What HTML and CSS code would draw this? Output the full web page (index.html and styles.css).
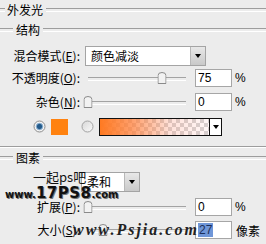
FILE: index.html
```html
<!DOCTYPE html>
<html>
<head>
<meta charset="utf-8">
<link rel="stylesheet" href="styles.css">
</head>
<body>
<div class="dialog">
  <div class="legend legend-outer"><span>外发光</span></div>
  <div class="group">
    <div class="legend legend-inner"><span>结构</span></div>
    <div class="row row-blend">
      <label class="lbl">混合模式(<u>E</u>):</label>
      <div class="select select-wide"><span class="select-value">颜色减淡</span><span class="select-btn"><i class="tri"></i></span></div>
    </div>
    <div class="row row-opacity">
      <label class="lbl">不透明度(<u>O</u>):</label>
      <div class="slider"><span class="thumb" style="left:75%"><svg width="9" height="12" viewBox="0 0 9 12"><path d="M0.5 11.5V3.5Q0.5 0.5 4.5 0.5Q8.5 0.5 8.5 3.5V11.5Z" fill="#f2f2f2" stroke="#8a8a8a"/></svg></span></div>
      <div class="num">75</div><span class="unit">%</span>
    </div>
    <div class="row row-noise">
      <label class="lbl">杂色(<u>N</u>):</label>
      <div class="slider"><span class="thumb" style="left:0%"><svg width="9" height="12" viewBox="0 0 9 12"><path d="M0.5 11.5V3.5Q0.5 0.5 4.5 0.5Q8.5 0.5 8.5 3.5V11.5Z" fill="#f2f2f2" stroke="#8a8a8a"/></svg></span></div>
      <div class="num">0</div><span class="unit">%</span>
    </div>
    <div class="row row-color">
      <svg class="radio" width="13" height="13" viewBox="0 0 13 13"><circle cx="6.5" cy="6.5" r="5.5" fill="#f3f3f3" stroke="#8c8c8c"/><circle cx="6.5" cy="6.5" r="3.2" fill="#235a8a" stroke="#8fb4d6" stroke-width="1"/></svg>
      <span class="swatch"></span>
      <svg class="radio radio-off" width="13" height="13" viewBox="0 0 13 13"><defs><linearGradient id="rg" x1="0" y1="0" x2="1" y2="1"><stop offset="0" stop-color="#d6d6d6"/><stop offset="1" stop-color="#fbfbfb"/></linearGradient></defs><circle cx="6.5" cy="6.5" r="5.5" fill="url(#rg)" stroke="#a3a3a3"/></svg>
      <div class="gradient"><span class="grad-fill"></span><span class="grad-btn"><i class="tri"></i></span></div>
    </div>
  </div>
  <div class="legend legend-elements"><span>图素</span></div>
  <div class="row row-tech">
    <label class="lbl"></label>
    <div class="select select-narrow"><span class="select-value">柔和</span><span class="select-btn"><i class="tri"></i></span></div>
  </div>
  <div class="row row-spread">
    <label class="lbl">扩展(<u>P</u>):</label>
    <div class="slider"><span class="thumb" style="left:0%"><svg width="9" height="12" viewBox="0 0 9 12"><path d="M0.5 11.5V3.5Q0.5 0.5 4.5 0.5Q8.5 0.5 8.5 3.5V11.5Z" fill="#f2f2f2" stroke="#8a8a8a"/></svg></span></div>
    <div class="num">0</div><span class="unit">%</span>
  </div>
  <div class="row row-size">
    <label class="lbl">大小(<u>S</u>):</label>
    <div class="slider"><span class="thumb" style="left:15.5%"><svg width="9" height="12" viewBox="0 0 9 12"><path d="M0.5 11.5V3.5Q0.5 0.5 4.5 0.5Q8.5 0.5 8.5 3.5V11.5Z" fill="#f2f2f2" stroke="#8a8a8a"/></svg></span></div>
    <div class="num"><span class="sel">27</span></div><span class="unit">像素</span>
  </div>

  <div class="wm wm-cn">一起ps吧</div>
  <div class="wm wm-17"><span class="wm-small">www.</span><span class="wm-big">17PS8</span><span class="wm-small">.com</span></div>
  <div class="wm wm-psjia">www.Psjia.com</div>
</div>
</body>
</html>
```

FILE: styles.css
```css
* { box-sizing: border-box; }
html, body { margin: 0; padding: 0; }
body {
  width: 266px;
  height: 244px;
  overflow: hidden;
  background: #ececec;
  font-family: "Noto Sans CJK SC", "Noto Sans", sans-serif;
  font-size: 12px;
  color: #000;
}
.dialog { position: relative; width: 266px; height: 244px; }

.legend { display: flex; align-items: center; height: 14px; line-height: 14px; }
.legend::before, .legend::after {
  content: "";
  height: 2px;
  border-top: 1px solid #9d9d9d;
  border-bottom: 1px solid #fff;
}
.legend::after { flex: 1; margin-left: 3px; }
.legend-outer { margin-top: 3px; }
.legend-outer::before { width: 5px; margin-right: 2px; }
.legend-inner { margin-top: 6px; }
.legend-inner::before { width: 13px; margin-right: 3px; }
.legend-elements { margin-top: 4px; }
.legend-elements::before { width: 13px; margin-right: 3px; }

.group {
  border-bottom: 1px solid #9d9d9d;
  box-shadow: 0 1px 0 #fff;
  padding-bottom: 10px;
}

.row { display: flex; align-items: center; }
.lbl { width: 80px; text-align: right; margin-right: 5px; line-height: 14px; white-space: nowrap; }
.lbl u { text-decoration: underline; text-underline-offset: 1px; }

.row-blend { height: 20px; margin-top: 9px; }
.row-opacity { height: 18px; margin-top: 3px; }
.row-noise { height: 18px; margin-top: 6px; }
.row-color { height: 19px; margin-top: 6px; padding-left: 33px; }
.row-tech { height: 20px; margin-top: 7px; }
.row-spread { height: 18px; margin-top: 6px; }
.row-size { height: 18px; margin-top: 5px; }

.select {
  display: flex;
  height: 20px;
  background: #fff;
  border: 1px solid #a4a4a4;
}
.select-wide { width: 121px; }
.select-narrow { width: 59px; margin-left: -4px; }
.select-value { flex: 1; padding-left: 5px; line-height: 18px; }
.select-btn {
  width: 15px;
  display: flex;
  align-items: center;
  justify-content: center;
  background: linear-gradient(#e8e8e8, #c9c9c9);
  border-left: 1px solid #b8b8b8;
}
.tri {
  display: block;
  width: 0; height: 0;
  border-left: 3.5px solid transparent;
  border-right: 3.5px solid transparent;
  border-top: 4px solid #000;
}

.slider { position: relative; width: 98px; height: 18px; margin-left: 3px; }
.slider::before {
  content: "";
  position: absolute;
  left: 0; right: 0; top: 8px;
  height: 2px;
  border-top: 1px solid #a3a3a3;
  border-bottom: 1px solid #fff;
}
.thumb { position: absolute; top: 3px; width: 9px; height: 12px; transform: translateX(-50%); }
.thumb svg { display: block; }

.num {
  width: 37px;
  height: 18px;
  margin-left: 9px;
  background: #fff;
  border: 1px solid #a6a6a6;
  font-family: "Liberation Sans", Arial, sans-serif;
  font-size: 12px;
  line-height: 16px;
  padding-left: 2px;
}
.sel { background: #6f96d8; color: #1b2f5a; padding: 0 1px; }
.unit { margin-left: 3px; font-family: "Liberation Sans", "Noto Sans CJK SC", sans-serif; font-size: 12px; }
.row-size .unit { font-family: "Noto Sans CJK SC", sans-serif; margin-left: 4px; }

.radio { display: block; }
.swatch { width: 17px; height: 16px; margin-left: 5px; background: #ff8210; }
.radio-off { margin-left: 13px; }
.gradient {
  display: flex;
  width: 123px;
  height: 18px;
  margin-left: 5px;
  border: 1px solid #111;
}
.grad-fill {
  flex: 1;
  background:
    linear-gradient(to right, #ff7a22 0%, rgba(255,128,60,0.75) 30%, rgba(255,140,110,0.25) 65%, rgba(255,160,160,0.08) 100%),
    conic-gradient(#d4d4d4 25%, #fff 0 50%, #d4d4d4 0 75%, #fff 0) 0 0 / 8px 8px;
}
.grad-btn {
  width: 12px;
  display: flex;
  align-items: center;
  justify-content: center;
  background: #fff;
  border-left: 1px solid #111;
}

.wm { position: absolute; white-space: nowrap; }
.wm-cn { left: 33px; top: 167px; font-size: 13px; line-height: 14px; color: #111; }
.wm-17 {
  left: 5px; top: 183px;
  font-family: "DejaVu Sans", sans-serif;
  font-weight: bold;
  color: #111;
  line-height: 14px;
  text-shadow: 1px 1px 0 #777;
}
.wm-small { font-size: 10px; }
.wm-big { font-size: 15px; letter-spacing: 0.5px; }
.wm-psjia {
  left: 73px; top: 219px;
  font-family: "Liberation Serif", serif;
  font-style: italic;
  font-weight: bold;
  font-size: 16px;
  letter-spacing: 2px;
  line-height: 16px;
  color: #222;
}
```
